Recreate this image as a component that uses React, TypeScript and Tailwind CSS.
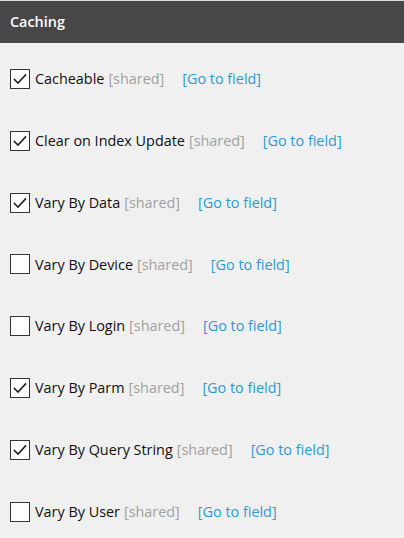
const rows = [
  { label: "Cacheable", checked: true },
  { label: "Clear on Index Update", checked: true },
  { label: "Vary By Data", checked: true },
  { label: "Vary By Device", checked: false },
  { label: "Vary By Login", checked: false },
  { label: "Vary By Parm", checked: true },
  { label: "Vary By Query String", checked: true },
  { label: "Vary By User", checked: false },
];

function Box({ checked }: { checked: boolean }) {
  return (
    <span className="flex h-[20px] w-[20px] shrink-0 items-center justify-center border border-[#333333] bg-white">
      {checked && (
        <svg width="16" height="16" viewBox="0 0 16 16" fill="none">
          <polyline
            points="2.5,8.5 6,12 13.5,4"
            stroke="#222222"
            strokeWidth="1.6"
            strokeLinecap="square"
          />
        </svg>
      )}
    </span>
  );
}

export default function App() {
  return (
    <div
      className="h-[538px] w-[404px] overflow-hidden bg-[#f0f0f0] text-[14.4px]"
      style={{ fontFamily: '"Open Sans", "Liberation Sans", sans-serif' }}
    >
      <div className="border-t border-[#dcdcdc] bg-[#474747] px-[10px] h-[43px] flex items-center">
        <span className="font-semibold text-white">Caching</span>
      </div>
      <div className="pt-[5px]">
        {rows.map((r) => (
          <div key={r.label} className="flex h-[61.85px] items-center pl-[10px]">
            <Box checked={r.checked} />
            <span className="ml-[5px] text-[#111111]">{r.label}</span>
            <span className="ml-[4px] text-[#a0a0a0]">[shared]</span>
            <a className="ml-[18px] cursor-pointer text-[#2d9bd2]">[Go to field]</a>
          </div>
        ))}
      </div>
    </div>
  );
}
